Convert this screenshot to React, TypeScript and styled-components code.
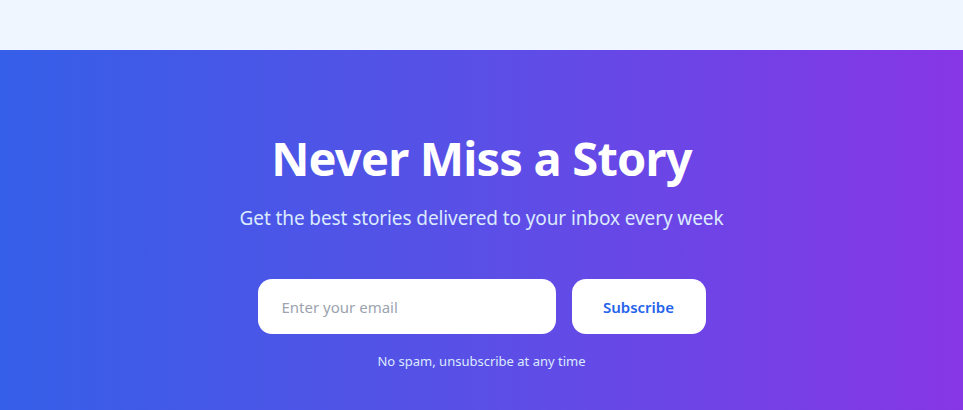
import React from 'react';
import styled, { createGlobalStyle } from 'styled-components';

const GlobalStyle = createGlobalStyle`
  body {
    margin: 0;
    background: #eff6ff;
    font-family: 'Noto Sans', 'Open Sans', sans-serif;
  }
`;

const TopBand = styled.div`
  height: 50px;
  background: #eff6ff;
`;

const Section = styled.section`
  background: linear-gradient(90deg, #355fe8 0%, #5a4fe6 50%, #8736e6 100%);
  padding: 84px 16px 40px;
  display: flex;
  flex-direction: column;
  align-items: center;
  text-align: center;
  color: #ffffff;
`;

const Title = styled.h2`
  margin: 0;
  font-size: 47px;
  line-height: 48px;
  font-weight: 700;
  letter-spacing: -0.8px;
`;

const Subtitle = styled.p`
  margin: 22px 0 0;
  font-size: 19px;
  line-height: 28px;
  letter-spacing: -0.1px;
  color: #dbeafe;
`;

const Form = styled.form`
  margin-top: 47px;
  width: 448px;
  display: flex;
  gap: 16px;
`;

const EmailInput = styled.input`
  flex: 1;
  min-width: 0;
  height: 55px;
  box-sizing: border-box;
  padding: 0 24px;
  border: none;
  border-radius: 14px;
  background: #ffffff;
  font-family: inherit;
  font-size: 15px;
  color: #111827;
  outline: none;

  &::placeholder {
    color: #9ca3af;
  }
`;

const SubscribeButton = styled.button`
  width: 134px;
  height: 55px;
  border: none;
  border-radius: 14px;
  background: #ffffff;
  color: #2563eb;
  font-family: inherit;
  font-size: 15px;
  font-weight: 600;
  cursor: pointer;
`;

const Note = styled.p`
  margin: 17px 0 0;
  font-size: 13px;
  line-height: 20px;
  color: #dbeafe;
`;

const App: React.FC = () => {
  return (
    <>
      <GlobalStyle />
      <TopBand />
      <Section>
        <Title>Never Miss a Story</Title>
        <Subtitle>Get the best stories delivered to your inbox every week</Subtitle>
        <Form onSubmit={(e) => e.preventDefault()}>
          <EmailInput type="email" placeholder="Enter your email" />
          <SubscribeButton type="submit">Subscribe</SubscribeButton>
        </Form>
        <Note>No spam, unsubscribe at any time</Note>
      </Section>
    </>
  );
};

export default App;
